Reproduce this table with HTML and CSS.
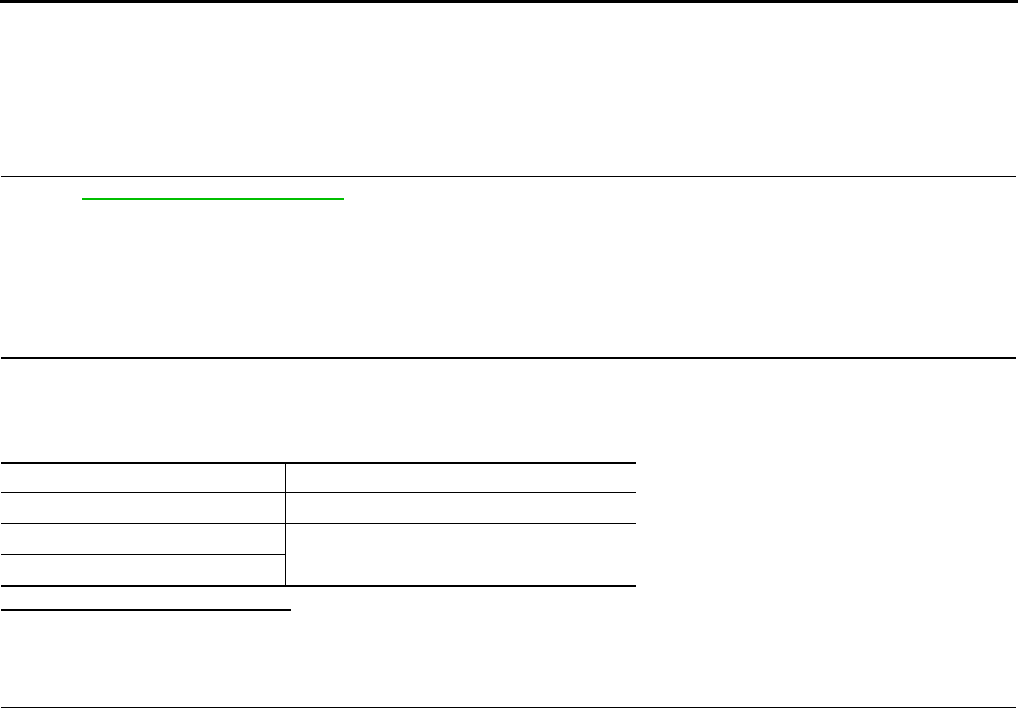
FILE: index.html
```html
<!DOCTYPE html>
<html>
<head>
<meta charset="utf-8">
<link rel="stylesheet" href="styles.css">
</head>
<body>
<div class="top-rule"></div>
<div class="page">
  <div class="header"></div>
  <div class="link-row"><a class="link" href="#"></a></div>
  <div class="rule-thick"></div>
  <div class="tbl">
    <div class="cell left line"></div>
    <div class="cell line"></div>
    <div class="cell left line tall"></div>
    <div class="cell line tall"></div>
    <div class="cell left line tall"></div>
    <div class="cell span"></div>
    <div class="cell left tall"></div>
  </div>
  <div class="underline"></div>
  <div class="bottom-rule"></div>
</div>
</body>
</html>
```
FILE: styles.css
```css
html, body {
  margin: 0;
  padding: 0;
  background: #fff;
  font-family: "Liberation Sans", Arial, sans-serif;
}
.top-rule {
  width: 1018px;
  height: 3px;
  background: #000;
}
.page {
  width: 1015px;
  margin-left: 1px;
}
.header {
  height: 173px;
  border-bottom: 1px solid #000;
}
.link-row {
  padding-top: 21px;
  padding-left: 81px;
  height: 2px;
}
.link {
  display: block;
  width: 262px;
  height: 2px;
  background: #00bf00;
}
.rule-thick {
  margin-top: 157px;
  height: 0;
  border-top: 2px solid #000;
}
.tbl {
  margin-top: 103px;
  width: 635px;
  display: grid;
  grid-template-columns: 285px 1fr;
  border-top: 2px solid #000;
  border-bottom: 2px solid #000;
}
.cell {
  height: 28px;
}
.cell.tall {
  height: 30px;
}
.cell.line {
  border-bottom: 1px solid #000;
}
.cell.left {
  border-right: 1px solid #000;
}
.cell.span {
  grid-row: span 2;
  height: auto;
}
.underline {
  margin-top: 22px;
  width: 290px;
  height: 2px;
  background: #000;
}
.bottom-rule {
  margin-top: 96px;
  height: 0;
  border-top: 1px solid #000;
}
```
